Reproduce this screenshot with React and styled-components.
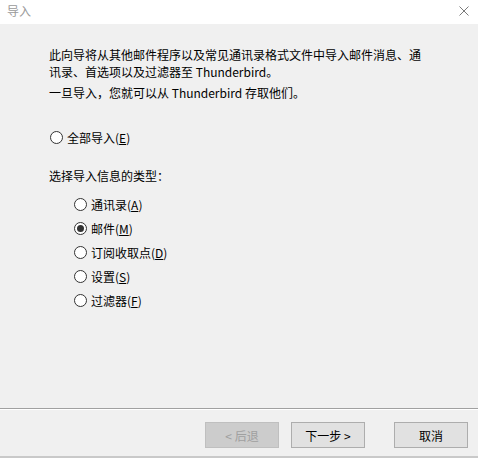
import React from "react";
import styled, { createGlobalStyle } from "styled-components";

const Global = createGlobalStyle`
  html, body { margin: 0; padding: 0; }
  body {
    font-family: "Noto Sans CJK SC", "Noto Sans", sans-serif;
    font-size: 12px;
    color: #000;
    background: #f0f0f0;
  }
`;

const Window = styled.div`
  width: 478px;
  height: 458px;
  display: flex;
  flex-direction: column;
  background: #f0f0f0;
  box-sizing: border-box;
  border-bottom: 2px solid #c9c9c9;
`;

const TitleBar = styled.div`
  height: 24px;
  flex: none;
  background: #fff;
  display: flex;
  align-items: center;
  justify-content: space-between;
  padding: 0 9px 3px 7px;
  box-sizing: border-box;
`;

const Title = styled.span`
  color: #9a9a9a;
  font-size: 12px;
  line-height: 17px;
`;

const CloseIcon = styled.svg`
  width: 10px;
  height: 10px;
  display: block;
`;

const Content = styled.div`
  flex: 1;
  padding: 22px 0 0 49px;
  display: flex;
  flex-direction: column;
`;

const Para = styled.p`
  margin: 0 0 ${(p) => p.$gap || 0}px 0;
  width: 378px;
  line-height: 17px;
`;

const Label = styled.div`
  margin: 18px 0 8px;
  line-height: 17px;
`;

const RadioRow = styled.label`
  display: flex;
  align-items: center;
  height: 24px;
  margin-left: ${(p) => p.$indent}px;
  margin-top: ${(p) => p.$top || 0}px;
  gap: 4px;
  line-height: 17px;
`;

const Circle = styled.span`
  width: 13px;
  height: 13px;
  box-sizing: border-box;
  border: 1px solid #333;
  border-radius: 50%;
  background: #fff;
  display: flex;
  align-items: center;
  justify-content: center;
  &::after {
    content: "";
    width: 7px;
    height: 7px;
    border-radius: 50%;
    background: ${(p) => (p.$checked ? "#333" : "transparent")};
  }
`;

const Footer = styled.div`
  flex: none;
  border-top: 1px solid #a0a0a0;
  box-shadow: inset 0 1px 0 #fff;
  padding: 13px 10px 8px 205px;
  display: flex;
  align-items: center;
`;

const Button = styled.button`
  width: 74px;
  height: 26px;
  box-sizing: border-box;
  font-family: inherit;
  font-size: 12px;
  padding: 0;
  margin-left: ${(p) => p.$ml || 0}px;
  background: ${(p) => (p.disabled ? "#cccccc" : "#e1e1e1")};
  border: 1px solid ${(p) => (p.disabled ? "#bfbfbf" : "#adadad")};
  color: ${(p) => (p.disabled ? "#a0a0a0" : "#000")};
  line-height: 17px;
`;

const types = [
  { label: "通讯录", key: "A" },
  { label: "邮件", key: "M", checked: true },
  { label: "订阅收取点", key: "D" },
  { label: "设置", key: "S" },
  { label: "过滤器", key: "F" },
];

export default function App() {
  return (
    <>
      <Global />
      <Window>
        <TitleBar>
          <Title>导入</Title>
          <CloseIcon viewBox="0 0 10 10">
            <path d="M0.5 0.5 L9.5 9.5 M9.5 0.5 L0.5 9.5" stroke="#7a7a7a" strokeWidth="1" fill="none" />
          </CloseIcon>
        </TitleBar>
        <Content>
          <Para $gap={4}>
            此向导将从其他邮件程序以及常见通讯录格式文件中导入邮件消息、通讯录、首选项以及过滤器至 Thunderbird。
          </Para>
          <Para>一旦导入，您就可以从 Thunderbird 存取他们。</Para>
          <RadioRow $indent={1} $top={24}>
            <Circle />
            <span>
              全部导入(<u>E</u>)
            </span>
          </RadioRow>
          <Label>选择导入信息的类型：</Label>
          {types.map((t) => (
            <RadioRow key={t.key} $indent={25}>
              <Circle $checked={t.checked} />
              <span>
                {t.label}(<u>{t.key}</u>)
              </span>
            </RadioRow>
          ))}
        </Content>
        <Footer>
          <Button disabled>&lt; 后退</Button>
          <Button $ml={12}>下一步 &gt;</Button>
          <Button $ml={29}>取消</Button>
        </Footer>
      </Window>
    </>
  );
}
